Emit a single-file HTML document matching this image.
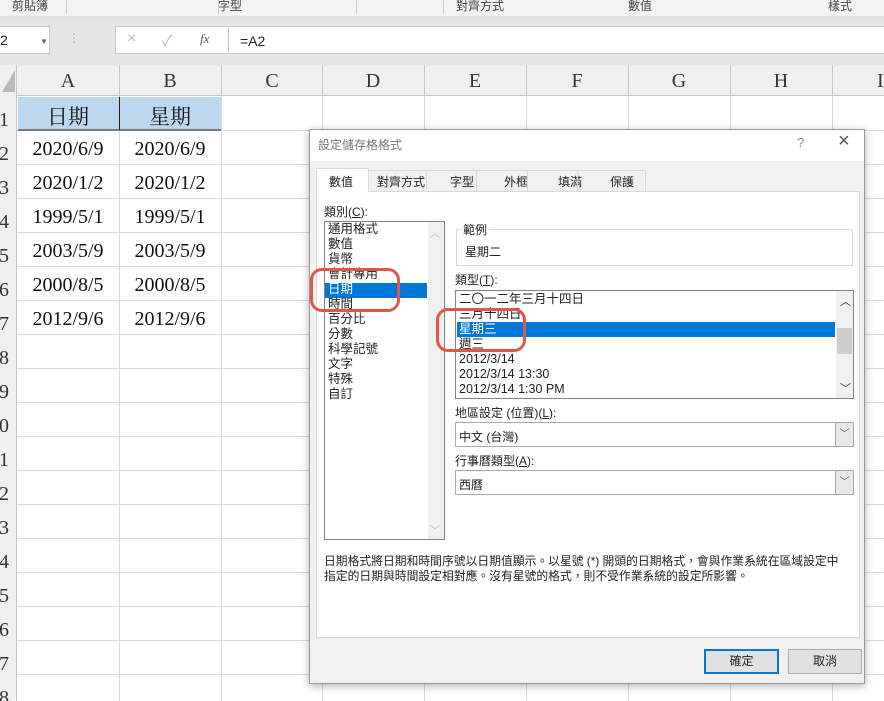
<!DOCTYPE html>
<html><head><meta charset="utf-8"><style>
*{margin:0;padding:0;box-sizing:border-box}
body{width:884px;height:701px;overflow:hidden;background:#fff;position:relative;font-family:"Liberation Sans","Noto Sans CJK TC",sans-serif}
.a{position:absolute}
.ui{font-family:"Liberation Sans","Noto Sans CJK TC",sans-serif;font-size:12px;color:#222}
.serif{font-family:"Liberation Serif","Noto Serif CJK SC",serif}
.cell{position:absolute;font-family:"Liberation Serif","Noto Serif CJK SC",serif;font-size:20px;color:#111;text-align:center;width:102px}
</style></head><body>
<!-- ribbon -->
<div class="a" style="left:0;top:0;width:884px;height:16px;background:#f3f3f3"></div>
<div class="a" style="left:0;top:16px;width:884px;height:4px;background:#e4e4e4"></div>
<div class="a ui" style="left:12px;top:-3px;font-size:12px;color:#444">剪貼簿</div>
<div class="a ui" style="left:130px;top:-3px;width:200px;text-align:center;color:#444">字型</div>
<div class="a ui" style="left:400px;top:-3px;width:160px;text-align:center;color:#444">對齊方式</div>
<div class="a ui" style="left:615px;top:-3px;width:50px;text-align:center;color:#444">數值</div>
<div class="a ui" style="left:810px;top:-3px;width:60px;text-align:center;color:#444">樣式</div>
<div class="a" style="left:66px;top:0;width:1px;height:14px;background:#ccc"></div>
<div class="a" style="left:218px;top:0;width:1px;height:14px;background:#ccc"></div>
<div class="a" style="left:356px;top:0;width:1px;height:14px;background:#ccc"></div>
<div class="a" style="left:443px;top:0;width:1px;height:14px;background:#ccc"></div>
<!-- formula bar -->
<div class="a" style="left:0;top:20px;width:884px;height:45px;background:#e6e6e6"></div>
<div class="a" style="left:-2px;top:26px;width:52px;height:28px;background:#fff;border:1px solid #ccc"></div>
<div class="a ui" style="left:0;top:32px;font-size:14px">2</div>
<div class="a" style="left:40px;top:37px;font-size:8px;color:#666">▼</div>
<div class="a" style="left:68px;top:31px;font-size:12px;color:#aaa">⋮</div>
<div class="a" style="left:115px;top:26px;width:117px;height:28px;background:#fff;border:1px solid #ccc"></div>
<div class="a" style="left:127px;top:30px;font-size:16px;color:#bbb">×</div>
<div class="a" style="left:162px;top:30px;font-size:15px;color:#bbb">✓</div>
<div class="a serif" style="left:200px;top:31px;font-size:13px;font-style:italic;color:#555">fx</div>
<div class="a" style="left:228px;top:26px;width:660px;height:28px;background:#fff;border:1px solid #ccc"></div>
<div class="a ui" style="left:240px;top:33px;font-size:14px;color:#222">=A2</div>
<!-- grid -->
<div class="a" style="left:0;top:65px;width:884px;height:31px;background:#efefef;border-bottom:1px solid #c6c6c6"></div>
<div class="a" style="left:0;top:65px;width:17px;height:636px;background:#efefef;border-right:1px solid #c6c6c6;overflow:hidden">
<div class="a serif" style="left:-10px;top:38px;font-size:20px;color:#333;line-height:34px;width:19px;text-align:right">1<br>2<br>3<br>4<br>5<br>6<br>7<br>8<br>9<br>0<br>1<br>2<br>3<br>4<br>5<br>6<br>7<br>8</div>
</div>
<div class="a" style="left:2px;top:70px;width:0;height:0;border-left:13px solid transparent;border-bottom:22px solid #bbb"></div>
<svg class="a" style="left:0;top:0" width="884" height="701">
<g stroke="#dadada" stroke-width="1">
<line x1="119.5" y1="96" x2="119.5" y2="701"/><line x1="221.5" y1="96" x2="221.5" y2="701"/><line x1="322.5" y1="96" x2="322.5" y2="701"/><line x1="424.5" y1="96" x2="424.5" y2="701"/><line x1="526.5" y1="96" x2="526.5" y2="701"/><line x1="628.5" y1="96" x2="628.5" y2="701"/><line x1="730.5" y1="96" x2="730.5" y2="701"/><line x1="832.5" y1="96" x2="832.5" y2="701"/>
<line x1="17" y1="130.5" x2="884" y2="130.5"/><line x1="17" y1="164.5" x2="884" y2="164.5"/><line x1="17" y1="198.5" x2="884" y2="198.5"/><line x1="17" y1="232.5" x2="884" y2="232.5"/><line x1="17" y1="266.5" x2="884" y2="266.5"/><line x1="17" y1="300.5" x2="884" y2="300.5"/><line x1="17" y1="334.5" x2="884" y2="334.5"/><line x1="17" y1="368.5" x2="884" y2="368.5"/><line x1="17" y1="402.5" x2="884" y2="402.5"/><line x1="17" y1="436.5" x2="884" y2="436.5"/><line x1="17" y1="470.5" x2="884" y2="470.5"/><line x1="17" y1="504.5" x2="884" y2="504.5"/><line x1="17" y1="538.5" x2="884" y2="538.5"/><line x1="17" y1="572.5" x2="884" y2="572.5"/><line x1="17" y1="606.5" x2="884" y2="606.5"/><line x1="17" y1="640.5" x2="884" y2="640.5"/><line x1="17" y1="674.5" x2="884" y2="674.5"/>
</g>
<g stroke="#c6c6c6"><line x1="119.5" y1="65" x2="119.5" y2="96"/><line x1="221.5" y1="65" x2="221.5" y2="96"/><line x1="322.5" y1="65" x2="322.5" y2="96"/><line x1="424.5" y1="65" x2="424.5" y2="96"/><line x1="526.5" y1="65" x2="526.5" y2="96"/><line x1="628.5" y1="65" x2="628.5" y2="96"/><line x1="730.5" y1="65" x2="730.5" y2="96"/><line x1="832.5" y1="65" x2="832.5" y2="96"/></g>
<rect x="18" y="97" width="203" height="33" fill="#bdd7ee"/>
<line x1="18" y1="130" x2="221" y2="130" stroke="#222"/><line x1="119.5" y1="97" x2="119.5" y2="130" stroke="#222"/>
</svg>
<div class="cell" style="left:17px;top:70px;color:#333">A</div><div class="cell" style="left:119px;top:70px;color:#333">B</div><div class="cell" style="left:221px;top:70px;color:#333">C</div><div class="cell" style="left:322px;top:70px;color:#333">D</div><div class="cell" style="left:424px;top:70px;color:#333">E</div><div class="cell" style="left:526px;top:70px;color:#333">F</div><div class="cell" style="left:628px;top:70px;color:#333">G</div><div class="cell" style="left:730px;top:70px;color:#333">H</div><div class="cell" style="left:832px;top:70px;color:#333;text-align:left;padding-left:45px">I</div>
<div class="cell" style="left:17px;top:101px;font-size:21px">日期</div><div class="cell" style="left:119px;top:101px;font-size:21px">星期</div>
<div class="cell" style="left:17px;top:138px">2020/6/9</div><div class="cell" style="left:119px;top:138px">2020/6/9</div>
<div class="cell" style="left:17px;top:172px">2020/1/2</div><div class="cell" style="left:119px;top:172px">2020/1/2</div>
<div class="cell" style="left:17px;top:206px">1999/5/1</div><div class="cell" style="left:119px;top:206px">1999/5/1</div>
<div class="cell" style="left:17px;top:240px">2003/5/9</div><div class="cell" style="left:119px;top:240px">2003/5/9</div>
<div class="cell" style="left:17px;top:274px">2000/8/5</div><div class="cell" style="left:119px;top:274px">2000/8/5</div>
<div class="cell" style="left:17px;top:308px">2012/9/6</div><div class="cell" style="left:119px;top:308px">2012/9/6</div>
<!-- dialog -->
<div class="a" style="left:309px;top:129px;width:556px;height:555px;background:#f0f0f0;border:1px solid #999;box-shadow:0 2px 8px rgba(0,0,0,.3)"></div>
<div class="a" style="left:310px;top:130px;width:554px;height:31px;background:#fff"></div>
<div class="a ui" style="left:318px;top:136px;color:#777">設定儲存格格式</div>
<div class="a ui" style="left:797px;top:135px;color:#888;font-size:13px">?</div>
<div class="a" style="left:838px;top:130px;font-size:20px;color:#555">×</div>
<!-- tabs -->
<div class="a" style="left:316px;top:191px;width:544px;height:447px;background:#fff;border:1px solid #d9d9d9"></div>
<div class="a" style="left:316px;top:170px;width:330px;height:22px;border:1px solid #d9d9d9;background:#f0f0f0"></div>
<div class="a" style="left:316px;top:168px;width:53px;height:24px;background:#fff;border:1px solid #d9d9d9;border-bottom:none"></div>
<div class="a ui" style="left:329px;top:173px">數值</div>
<div class="a ui" style="left:377px;top:173px">對齊方式</div>
<div class="a ui" style="left:450px;top:173px">字型</div>
<div class="a ui" style="left:504px;top:173px">外框</div>
<div class="a ui" style="left:558px;top:173px">填滿</div>
<div class="a ui" style="left:610px;top:173px">保護</div>
<div class="a" style="left:426px;top:171px;width:1px;height:20px;background:#d9d9d9"></div>
<div class="a" style="left:476px;top:171px;width:1px;height:20px;background:#d9d9d9"></div>
<div class="a" style="left:527px;top:171px;width:1px;height:20px;background:#d9d9d9"></div>
<div class="a" style="left:577px;top:171px;width:1px;height:20px;background:#d9d9d9"></div>
<div class="a ui" style="left:324px;top:203px">類別(<u>C</u>):</div>
<div class="a" style="left:324px;top:221px;width:121px;height:319px;border:1px solid #828282;background:#fff"></div>
<div class="a" style="left:428px;top:222px;width:16px;height:317px;background:#f0f0f0"></div>
<div class="a" style="left:430px;top:225px;font-size:10px;color:#bbb">︿</div>
<div class="a" style="left:430px;top:522px;font-size:10px;color:#bbb">﹀</div>
<div class="a" style="left:325px;top:283px;width:102px;height:15px;background:#0078d7"></div>
<div class="a ui" style="left:328px;top:222px;line-height:15px;font-size:12.5px">通用格式<br>數值<br>貨幣<br>會計專用<br><span style="color:#fff">日期</span><br>時間<br>百分比<br>分數<br>科學記號<br>文字<br>特殊<br>自訂</div>
<div class="a" style="left:310px;top:268px;width:90px;height:44px;border:3px solid #e0574a;border-radius:12px"></div>
<!-- sample -->
<div class="a" style="left:456px;top:229px;width:397px;height:37px;border:1px solid #d9d9d9"></div>
<div class="a ui" style="left:460px;top:221px;background:#fff;padding:0 3px">範例</div>
<div class="a ui" style="left:465px;top:243px">星期二</div>
<div class="a ui" style="left:455px;top:271px">類型(<u>T</u>):</div>
<div class="a" style="left:455px;top:290px;width:399px;height:109px;border:1px solid #828282;background:#fff"></div>
<div class="a" style="left:836px;top:291px;width:17px;height:107px;background:#f0f0f0"></div>
<div class="a" style="left:837px;top:328px;width:15px;height:26px;background:#cdcdcd"></div>
<div class="a" style="left:840px;top:293px;font-size:11px;color:#333">︿</div>
<div class="a" style="left:840px;top:380px;font-size:11px;color:#333">﹀</div>
<div class="a" style="left:457px;top:322px;width:378px;height:15px;background:#0078d7"></div>
<div class="a ui" style="left:459px;top:292px;line-height:15px;font-size:12.5px">二〇一二年三月十四日<br>三月十四日<br><span style="color:#fff">星期三</span><br>週三<br>2012/3/14<br>2012/3/14 13:30<br>2012/3/14 1:30 PM</div>
<div class="a" style="left:436px;top:308px;width:90px;height:44px;border:3px solid #e0574a;border-radius:12px"></div>
<div class="a ui" style="left:455px;top:404px">地區設定 (位置)(<u>L</u>):</div>
<div class="a" style="left:455px;top:422px;width:399px;height:25px;border:1px solid #a8a8a8;background:#fff"></div>
<div class="a" style="left:835px;top:423px;width:18px;height:23px;background:#e8e8e8;border-left:1px solid #a8a8a8;font-size:10px;color:#555;text-align:center;line-height:23px">﹀</div>
<div class="a ui" style="left:459px;top:428px">中文 (台灣)</div>
<div class="a ui" style="left:455px;top:452px">行事曆類型(<u>A</u>):</div>
<div class="a" style="left:455px;top:470px;width:399px;height:25px;border:1px solid #a8a8a8;background:#fff"></div>
<div class="a" style="left:835px;top:471px;width:18px;height:23px;background:#e8e8e8;border-left:1px solid #a8a8a8;font-size:10px;color:#555;text-align:center;line-height:23px">﹀</div>
<div class="a ui" style="left:459px;top:476px">西曆</div>
<div class="a ui" style="left:324px;top:554px;line-height:15px;font-size:11.8px;width:522px">日期格式將日期和時間序號以日期值顯示。以星號 (*) 開頭的日期格式，會與作業系統在區域設定中指定的日期與時間設定相對應。沒有星號的格式，則不受作業系統的設定所影響。</div>
<div class="a ui" style="left:704px;top:649px;width:75px;height:25px;border:2px solid #0078d7;background:#e1e1e1;text-align:center;line-height:21px">確定</div>
<div class="a ui" style="left:788px;top:649px;width:74px;height:25px;border:1px solid #adadad;background:#e1e1e1;text-align:center;line-height:23px">取消</div>
</body></html>
